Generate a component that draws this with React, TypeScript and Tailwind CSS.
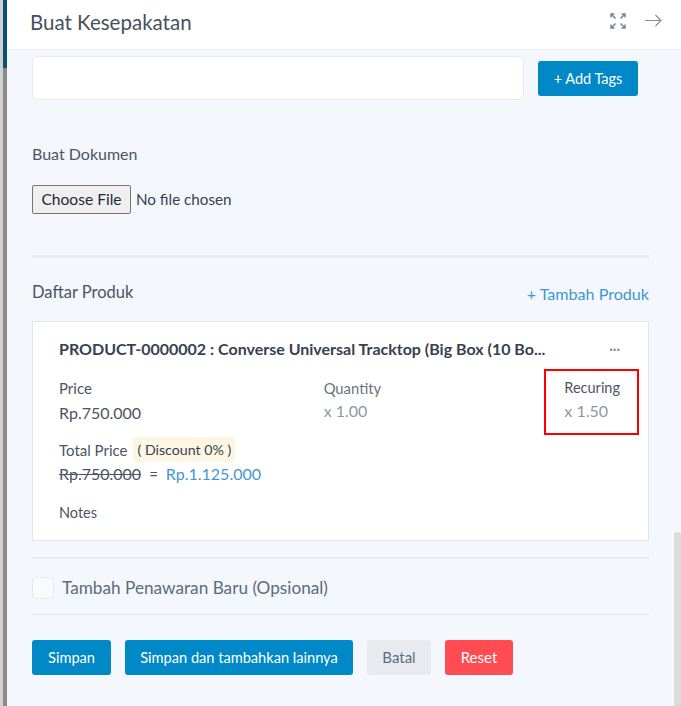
import React from 'react'

const ExpandIcon = () => (
  <svg width="16" height="16" viewBox="0 0 16 16" fill="none" stroke="#7b8492" strokeWidth="1.5">
    <path d="M1.5 1.5L5.5 5.5M1 4.5V1H4.5" />
    <path d="M14.5 1.5L10.5 5.5M15 4.5V1H11.5" />
    <path d="M1.5 14.5L5.5 10.5M1 11.5V15H4.5" />
    <path d="M14.5 14.5L10.5 10.5M15 11.5V15H11.5" />
  </svg>
)

const ArrowIcon = () => (
  <svg width="17" height="13" viewBox="0 0 17 13" fill="none" stroke="#858c98" strokeWidth="1.1">
    <path d="M0 6.5H16M10.5 1L16 6.5L10.5 12" />
  </svg>
)

const App: React.FC = () => {
  return (
    <div className="flex h-[706px] w-[681px] overflow-hidden bg-[#f4f7fb] font-['Lato',sans-serif] text-[#4b5563]">
      <div className="flex w-[7px] shrink-0 flex-col border-l-[3px] border-[#d0d0d0] bg-[#8a8a8a]">
        <div className="h-[68px] bg-[#0b4f74]" />
      </div>

      <div className="flex min-w-0 flex-1 flex-col">
        <header className="flex h-[50px] shrink-0 items-center justify-between border-b border-[#eef0f3] bg-white pb-[4px] pl-[23px] pr-[19px]">
          <h1 className="text-[20.5px] text-[#48505c]">Buat Kesepakatan</h1>
          <div className="mb-[4px] flex items-center gap-[19px]">
            <ExpandIcon />
            <ArrowIcon />
          </div>
        </header>

        <main className="relative flex-1 pl-[25px] pr-[32px]">
          <div className="flex items-start gap-[14px] pt-[6px]">
            <div className="h-[44px] w-[492px] rounded-md border border-[#e9ecef] bg-white" />
            <button className="mt-[5px] h-[35px] w-[100px] rounded-[3px] bg-[#0088c7] text-[14.5px] text-white">
              + Add Tags
            </button>
          </div>

          <p className="mt-[44px] text-[16px] leading-[20px]">Buat Dokumen</p>

          <div className="mt-[21px] flex items-center gap-[5px]">
            <div className="flex h-[29px] w-[99px] items-center justify-center rounded-[2px] border border-[#767676] bg-[#efefef] text-[15.6px] text-[#1f2937]">
              Choose File
            </div>
            <span className="text-[15.2px] text-[#374151]">No file chosen</span>
          </div>

          <div className="mt-[41px] h-[3px] bg-[#e9ecef]" />

          <div className="mt-[22px] flex items-center justify-between">
            <span className="text-[16.5px] leading-[20px]">Daftar Produk</span>
            <span className="mt-[4px] text-[16.1px] leading-[20px] text-[#3f97d3]">+ Tambah Produk</span>
          </div>

          <section className="mt-[17px] h-[220px] border border-[#e1e6ec] bg-white pl-[26px] pr-[28px] pt-[16px]">
            <div className="flex items-center justify-between">
              <h2 className="text-[16px] font-bold leading-[22px] text-[#374151]">
                PRODUCT-0000002 : Converse Universal Tracktop (Big Box (10 Bo...
              </h2>
              <span className="text-[13px] font-bold leading-[22px] text-[#8a93a0]">···</span>
            </div>

            <div className="mt-[19px] flex items-start">
              <div className="w-[265px]">
                <div className="text-[15px] leading-[18px]">Price</div>
                <div className="mt-[5px] text-[16px] leading-[22px]">Rp.750.000</div>
              </div>
              <div className="w-[241px]">
                <div className="text-[14.8px] leading-[18px] text-[#6b7280]">Quantity</div>
                <div className="mt-[3px] text-[16px] leading-[22px] text-[#8d97a5]">x 1.00</div>
              </div>
              <div>
                <div className="text-[14.5px] leading-[18px]">Recuring</div>
                <div className="mt-[3px] text-[16px] leading-[22px] text-[#8d97a5]">x 1.50</div>
              </div>
            </div>

            <div className="mt-[13px] flex items-center gap-[6px]">
              <span className="text-[15px] leading-[18px]">Total Price</span>
              <span className="flex h-[25px] items-center bg-[#fdf6e3] px-[4px] text-[14.2px] text-[#374151]">( Discount 0% )</span>
            </div>
            <div className="mt-[1px] flex items-center text-[16px] leading-[22px]">
              <span className="line-through">Rp.750.000</span>
              <span className="ml-[8px] text-[15px]">=</span>
              <span className="ml-[8px] text-[#3f97d3]">Rp.1.125.000</span>
            </div>

            <div className="mt-[19px] text-[14.5px] leading-[18px]">Notes</div>
          </section>

          <div className="mt-[16px] h-[2px] bg-[#e9ecef]" />

          <label className="mt-[18px] flex items-center gap-[8px]">
            <span className="h-[22px] w-[22px] rounded-[4px] border border-[#e5e8ec] bg-[#f8fafc]" />
            <span className="text-[17.2px] leading-[22px] text-[#5b6b7c]">Tambah Penawaran Baru (Opsional)</span>
          </label>

          <div className="mt-[15px] h-[1px] bg-[#e3e6ea]" />

          <div className="mt-[25px] flex gap-[14px]">
            <button className="h-[35px] w-[79px] rounded-[3px] bg-[#0088c7] text-[14.6px] text-white">Simpan</button>
            <button className="h-[35px] w-[228px] rounded-[3px] bg-[#0088c7] text-[14.6px] text-white">
              Simpan dan tambahkan lainnya
            </button>
            <button className="h-[35px] w-[64px] rounded-[3px] bg-[#e7ebef] text-[15px] text-[#5f6b7a]">Batal</button>
            <button className="h-[35px] w-[68px] rounded-[3px] bg-[#ff4b52] text-[15px] text-white">Reset</button>
          </div>

          <div className="absolute right-0 bottom-0 h-[174px] w-[7px] rounded-t-[3px] bg-[#dcdcdc]" />
        </main>
      </div>

      <div className="pointer-events-none absolute left-[544px] top-[369px] h-[66px] w-[95px] border-[2px] border-[#ff0000]" />
    </div>
  )
}

export default App
